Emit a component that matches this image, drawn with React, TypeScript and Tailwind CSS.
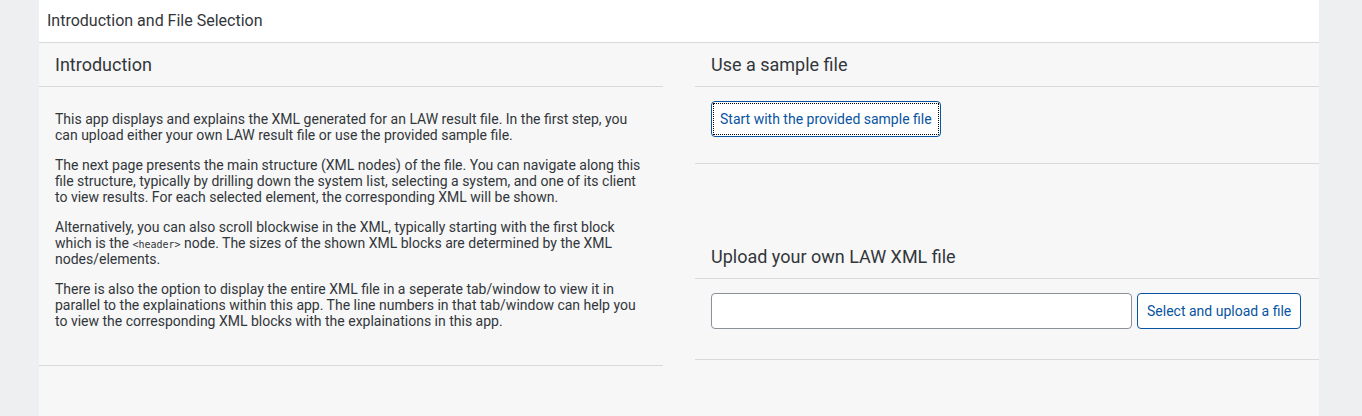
import React from "react"

const FONT = "font-['Roboto',sans-serif]"

function SectionTitle({ children }: { children: React.ReactNode }) {
  return (
    <div className="flex h-[44px] items-center border-b border-[#d9d9d9] px-4 text-[18px] text-[#32363a]">
      {children}
    </div>
  )
}

export default function App() {
  return (
    <div className={`min-h-[416px] bg-[#edeff0] ${FONT}`}>
      <div className="ml-[39px] min-h-[416px] w-[1280px] bg-[#f7f7f7]">
        <div className="flex h-[43px] items-center border-b border-[#d9d9d9] bg-white px-2 text-[16px] text-[#32363a]">
          Introduction and File Selection
        </div>

        <div className="grid grid-cols-2 gap-8">
          {/* Left — introduction text */}
          <div className="border-b border-[#d9d9d9]">
            <SectionTitle>Introduction</SectionTitle>
            <div className="flex flex-col gap-[14px] px-4 pt-[24px] pb-[36px] text-[14px] leading-[16px] text-[#32363a]">
              <p>
                This app displays and explains the XML generated for an LAW result file. In the first step, you
                can upload either your own LAW result file or use the provided sample file.
              </p>
              <p>
                The next page presents the main structure (XML nodes) of the file. You can navigate along this
                file structure, typically by drilling down the system list, selecting a system, and one of its client
                to view results. For each selected element, the corresponding XML will be shown.
              </p>
              <p>
                Alternatively, you can also scroll blockwise in the XML, typically starting with the first block
                which is the{" "}
                <code className="font-['DejaVu_Sans_Mono',monospace] text-[10px] leading-none">&lt;header&gt;</code>{" "}
                node. The sizes of the shown XML blocks are determined by the XML nodes/elements.
              </p>
              <p>
                There is also the option to display the entire XML file in a seperate tab/window to view it in
                parallel to the explainations within this app. The line numbers in that tab/window can help you
                to view the corresponding XML blocks with the explainations in this app.
              </p>
            </div>
          </div>

          {/* Right — file selection */}
          <div>
            <SectionTitle>Use a sample file</SectionTitle>
            <div className="border-b border-[#d9d9d9] px-4 pt-[14px] pb-[26px]">
              <button
                type="button"
                className="h-[36px] rounded-[4px] border border-[#0854a0] bg-white p-[1px] text-[14px] text-[#0854a0]"
              >
                <span className="flex h-full items-center border border-dotted border-black px-[6px]">
                  Start with the provided sample file
                </span>
              </button>
            </div>

            <div className="mt-[71px]">
              <SectionTitle>Upload your own LAW XML file</SectionTitle>
              <div className="flex gap-[5px] border-b border-[#d9d9d9] px-4 pt-[14px] pb-[30px]">
                <input
                  type="text"
                  className="h-[36px] w-[421px] rounded-[4px] border border-[#89919a] bg-white px-2 text-[14px] outline-none"
                />
                <button
                  type="button"
                  className="h-[36px] rounded-[4px] border border-[#0854a0] bg-white px-[9px] text-[14px] text-[#0854a0]"
                >
                  Select and upload a file
                </button>
              </div>
            </div>
          </div>
        </div>
      </div>
    </div>
  )
}
